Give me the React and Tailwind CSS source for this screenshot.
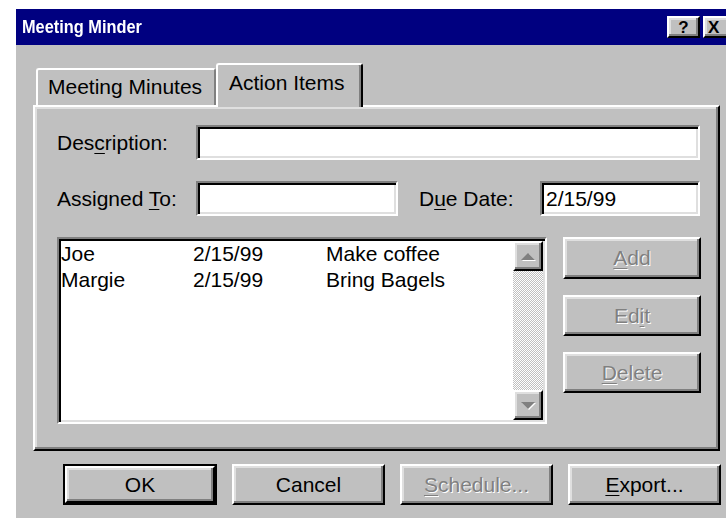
import React from 'react';

const font = "font-['Liberation_Sans',Arial,sans-serif]";
const raised =
  'border-2 border-t-white border-l-white border-r-black border-b-black shadow-[inset_-2px_-2px_0_#808080,inset_2px_2px_0_#dfdfdf]';
const sunken =
  'border-2 border-t-[#808080] border-l-[#808080] border-r-white border-b-white shadow-[inset_2px_2px_0_#000,inset_-2px_-2px_0_#dfdfdf]';
const disabled = 'text-[#808080] [text-shadow:1px_1px_0_#fff]';

const items = [
  { who: 'Joe', due: '2/15/99', what: 'Make coffee' },
  { who: 'Margie', due: '2/15/99', what: 'Bring Bagels' },
];

function Key({ children }) {
  return <span className="underline underline-offset-[3px] decoration-1">{children}</span>;
}

function Button({ children, off, isDefault, className = '' }) {
  const inner = (
    <div
      className={`${raised} bg-[#c0c0c0] flex items-center justify-center w-full h-full ${
        off ? disabled : 'text-black'
      }`}
    >
      {children}
    </div>
  );
  if (isDefault) {
    return <div className={`border-2 border-black ${className}`}>{inner}</div>;
  }
  return <div className={className}>{inner}</div>;
}

function Arrow({ down }) {
  return (
    <svg width="16" height="9" viewBox="0 0 16 9">
      <polygon points={down ? '2,2 16,2 9,9' : '2,9 16,9 9,2'} fill="#ffffff" />
      <polygon points={down ? '1,1 15,1 8,8' : '1,8 15,8 8,1'} fill="#808080" />
    </svg>
  );
}

function Field({ className = '', children }) {
  return (
    <div className={`${sunken} bg-white h-[35px] flex items-center pl-[4px] ${className}`}>
      {children}
    </div>
  );
}

export default function App() {
  return (
    <div
      className={`w-[726px] h-[519px] bg-white overflow-hidden pt-[9px] pl-[16px] ${font} text-[21px] leading-[24px] text-black`}
    >
      <div className="w-[720px] h-[509px] bg-[#c0c0c0] flex flex-col">
        {/* title bar */}
        <div className="h-[36px] bg-[#000080] flex items-center pl-[6px] shrink-0">
          <span className="text-white font-bold text-[19px] origin-left scale-x-[0.86] whitespace-nowrap flex-1">
            Meeting Minder
          </span>
          <div className="flex gap-[3px]">
            <div
              className={`${raised} bg-[#c0c0c0] w-[33px] h-[22px] flex items-center justify-center text-[17px] font-bold leading-none`}
            >
              ?
            </div>
            <div
              className={`${raised} bg-[#c0c0c0] w-[33px] h-[22px] flex items-center pl-[3px] text-[17px] font-bold leading-none`}
            >
              X
            </div>
          </div>
        </div>

        {/* tabs */}
        <div className="pl-[17px] pt-[18px]">
          <div className="flex items-end h-[42px] pl-[3px]">
            <div className="w-[180px] h-[37px] border-2 border-b-0 border-t-white border-l-white border-r-[#808080] rounded-t-[3px] flex items-center pl-[10px] pb-[2px]">
              Meeting Minutes
            </div>
            <div className="relative z-10 w-[147px] h-[44px] mb-[-2px] bg-[#c0c0c0] border-2 border-b-0 border-t-white border-l-white border-r-black rounded-t-[3px] shadow-[inset_-2px_0_0_#808080] flex items-start pt-[6px] pl-[11px]">
              Action Items
            </div>
          </div>

          {/* tab page */}
          <div className={`${raised} w-[687px] h-[346px] pl-[22px] pt-[18px] flex flex-col`}>
            <div className="flex items-center h-[35px]">
              <span className="w-[139px]">
                Des<Key>c</Key>ription:
              </span>
              <Field className="w-[504px]" />
            </div>
            <div className="flex items-center h-[35px] mt-[21px]">
              <span className="w-[139px]">
                Assigned <Key>T</Key>o:
              </span>
              <Field className="w-[202px]" />
              <span className="ml-[21px] w-[121px]">
                D<Key>u</Key>e Date:
              </span>
              <Field className="w-[160px]">2/15/99</Field>
            </div>

            <div className="flex mt-[21px]">
              {/* action list */}
              <div className={`${sunken} bg-white w-[490px] h-[187px] flex p-[2px]`}>
                <div className="flex-1">
                  {items.map((it) => (
                    <div key={it.who} className="flex h-[26px] items-center">
                      <span className="w-[132px]">{it.who}</span>
                      <span className="w-[133px]">{it.due}</span>
                      <span>{it.what}</span>
                    </div>
                  ))}
                </div>
                <div className="w-[30px] flex flex-col bg-[repeating-conic-gradient(#c0c0c0_0%_25%,#ffffff_0%_50%)] bg-[length:2px_2px]">
                  <div className={`${raised} bg-[#c0c0c0] h-[30px] flex items-center justify-center`}>
                    <Arrow />
                  </div>
                  <div className="flex-1" />
                  <div className={`${raised} bg-[#c0c0c0] h-[30px] flex items-center justify-center`}>
                    <Arrow down />
                  </div>
                </div>
              </div>

              <div className="ml-[16px] flex flex-col gap-[16px]">
                <Button off className="w-[138px] h-[42px]">
                  <Key>A</Key>dd
                </Button>
                <Button off className="w-[138px] h-[41px]">
                  Ed<Key>i</Key>t
                </Button>
                <Button off className="w-[138px] h-[41px]">
                  <Key>D</Key>elete
                </Button>
              </div>
            </div>
          </div>
        </div>

        {/* dialog buttons */}
        <div className="flex gap-[15px] pl-[47px] mt-[13px]">
          <Button isDefault className="w-[154px] h-[41px]">
            OK
          </Button>
          <Button className="w-[153px] h-[41px]">Cancel</Button>
          <Button off className="w-[153px] h-[41px]">
            <Key>S</Key>chedule...
          </Button>
          <Button className="w-[153px] h-[41px]">
            <Key>E</Key>xport...
          </Button>
        </div>
      </div>
    </div>
  );
}
